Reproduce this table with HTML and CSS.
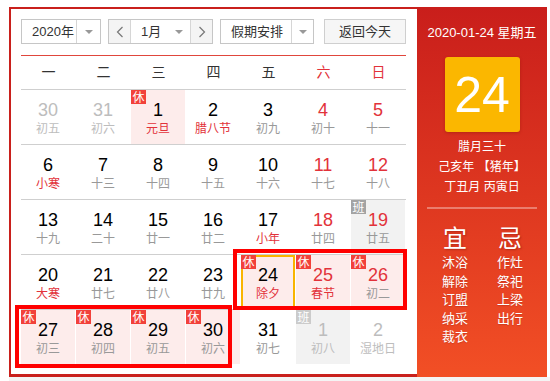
FILE: index.html
```html
<!DOCTYPE html>
<html lang="zh-CN">
<head>
<meta charset="utf-8">
<title>万年历</title>
<link rel="stylesheet" href="styles.css">
</head>
<body>
<div class="page">
  <div class="cal">
    <div class="main">
      <div class="controls">
        <div class="sel sel-year">
          <span class="sel-text">2020年</span>
          <span class="sel-arrow"><i class="tri"></i></span>
        </div>
        <div class="sel sel-month">
          <span class="nav-btn nav-prev"><svg width="8" height="12" viewBox="0 0 8 12"><polyline points="6.5,1 1.5,6 6.5,11" fill="none" stroke="#777" stroke-width="1.2"/></svg></span>
          <span class="month-mid"><span class="sel-text">1月</span><i class="tri"></i></span>
          <span class="nav-btn nav-next"><svg width="8" height="12" viewBox="0 0 8 12"><polyline points="1.5,1 6.5,6 1.5,11" fill="none" stroke="#777" stroke-width="1.2"/></svg></span>
        </div>
        <div class="sel sel-holiday">
          <span class="sel-text">假期安排</span>
          <span class="sel-arrow"><i class="tri"></i></span>
        </div>
        <button class="today-btn">返回今天</button>
      </div>
      <div class="redline"></div>
      <div class="weekhead">
        <span>一</span><span>二</span><span>三</span><span>四</span><span>五</span><span class="wk">六</span><span class="wk">日</span>
      </div>
      <div class="grid">
        <div class="row">
          <div class="cell other"><b>30</b><em>初五</em></div>
          <div class="cell other"><b>31</b><em>初六</em></div>
          <div class="cell rest"><i class="badge">休</i><b>1</b><em class="fest">元旦</em></div>
          <div class="cell"><b>2</b><em class="fest">腊八节</em></div>
          <div class="cell"><b>3</b><em>初九</em></div>
          <div class="cell weekend"><b>4</b><em>初十</em></div>
          <div class="cell weekend"><b>5</b><em>十一</em></div>
        </div>
        <div class="row">
          <div class="cell"><b>6</b><em class="fest">小寒</em></div>
          <div class="cell"><b>7</b><em>十三</em></div>
          <div class="cell"><b>8</b><em>十四</em></div>
          <div class="cell"><b>9</b><em>十五</em></div>
          <div class="cell"><b>10</b><em>十六</em></div>
          <div class="cell weekend"><b>11</b><em>十七</em></div>
          <div class="cell weekend"><b>12</b><em>十八</em></div>
        </div>
        <div class="row">
          <div class="cell"><b>13</b><em>十九</em></div>
          <div class="cell"><b>14</b><em>二十</em></div>
          <div class="cell"><b>15</b><em>廿一</em></div>
          <div class="cell"><b>16</b><em>廿二</em></div>
          <div class="cell"><b>17</b><em class="fest">小年</em></div>
          <div class="cell weekend"><b>18</b><em>廿四</em></div>
          <div class="cell weekend work"><i class="badge ban">班</i><b>19</b><em>廿五</em></div>
        </div>
        <div class="row">
          <div class="cell"><b>20</b><em class="fest">大寒</em></div>
          <div class="cell"><b>21</b><em>廿七</em></div>
          <div class="cell"><b>22</b><em>廿八</em></div>
          <div class="cell"><b>23</b><em>廿九</em></div>
          <div class="cell rest today"><i class="badge">休</i><b>24</b><em class="fest">除夕</em></div>
          <div class="cell rest weekend"><i class="badge">休</i><b>25</b><em class="fest">春节</em></div>
          <div class="cell rest weekend"><i class="badge">休</i><b>26</b><em>初二</em></div>
        </div>
        <div class="row">
          <div class="cell rest"><i class="badge">休</i><b>27</b><em>初三</em></div>
          <div class="cell rest"><i class="badge">休</i><b>28</b><em>初四</em></div>
          <div class="cell rest"><i class="badge">休</i><b>29</b><em>初五</em></div>
          <div class="cell rest"><i class="badge">休</i><b>30</b><em>初六</em></div>
          <div class="cell"><b>31</b><em>初七</em></div>
          <div class="cell other work"><i class="badge ban light">班</i><b>1</b><em>初八</em></div>
          <div class="cell other"><b>2</b><em>湿地日</em></div>
        </div>
      </div>
      <div class="mark mark-a"></div>
      <div class="mark mark-b"></div>
    </div>
    <div class="panel">
      <div class="p-date">2020-01-24 星期五</div>
      <div class="p-day">24</div>
      <div class="p-lunar">
        <div>腊月三十</div>
        <div>己亥年 【猪年】</div>
        <div>丁丑月 丙寅日</div>
      </div>
      <div class="p-line"></div>
      <div class="yiji">
        <div class="yj-col">
          <div class="yj-big">宜</div>
          <div class="yj-item">沐浴</div>
          <div class="yj-item">解除</div>
          <div class="yj-item">订盟</div>
          <div class="yj-item">纳采</div>
          <div class="yj-item">裁衣</div>
        </div>
        <div class="yj-col">
          <div class="yj-big">忌</div>
          <div class="yj-item">作灶</div>
          <div class="yj-item">祭祀</div>
          <div class="yj-item">上梁</div>
          <div class="yj-item">出行</div>
        </div>
      </div>
    </div>
  </div>
  <div class="under"></div>
</div>
</body>
</html>
```
FILE: styles.css
```css
* { box-sizing: border-box; }
html, body { margin: 0; padding: 0; background: #fff; }
body {
  font-family: "Liberation Sans", "Noto Sans CJK SC", sans-serif;
  color: #333;
  width: 550px;
  height: 381px;
  overflow: hidden;
}
.page { padding: 7px 0 0 9px; }
.cal { display: flex; width: 538px; height: 370px; }
.main {
  position: relative;
  width: 408px;
  height: 370px;
  border: 2px solid #c9201c;
  border-right: 0;
  border-bottom-width: 3px;
  padding: 10px 11px 0 10px;
}
.controls { display: flex; height: 25px; }
.sel {
  display: flex;
  height: 25px;
  border: 1px solid #c6c6c6;
  background: #fff;
  font-size: 13px;
  line-height: 23px;
  color: #333;
}
.sel-text { font-family: "Liberation Sans", "Noto Sans CJK SC", sans-serif; }
.sel-year { width: 80px; margin-right: 7px; }
.sel-year .sel-text { width: 54px; padding-left: 10px; }
.sel-arrow {
  flex: 1;
  border-left: 1px solid #d6d6d6;
  display: flex;
  align-items: center;
  justify-content: center;
}
.tri {
  display: block;
  width: 0; height: 0;
  border-left: 4px solid transparent;
  border-right: 4px solid transparent;
  border-top: 4px solid #999;
}
.sel-month { width: 105px; margin-right: 7px; }
.nav-btn {
  width: 22px;
  background: #f4f4f4;
  display: flex;
  align-items: center;
  justify-content: center;
}
.nav-prev { border-right: 1px solid #d6d6d6; }
.nav-next { border-left: 1px solid #d6d6d6; }
.month-mid {
  flex: 1;
  display: flex;
  align-items: center;
  padding-left: 10px;
  padding-right: 7px;
  justify-content: space-between;
}
.sel-holiday { width: 94px; margin-right: 10px; }
.sel-holiday .sel-text { width: 70px; padding-left: 10px; }
.sel-holiday .sel-arrow { flex: 1; }
.today-btn {
  width: 82px;
  height: 25px;
  border: 1px solid #cfcfcf;
  background: #f6f6f6;
  font-family: "Liberation Sans", "Noto Sans CJK SC", sans-serif;
  font-size: 13px;
  color: #333;
  padding: 0;
  line-height: 23px;
}
.redline { height: 1px; background: #e0463c; margin-top: 11px; }
.weekhead {
  display: grid;
  grid-template-columns: repeat(7, 55px);
  height: 33px;
  line-height: 33px;
  font-size: 14px;
  text-align: center;
  color: #333;
}
.weekhead .wk { color: #e2323a; }
.row {
  display: grid;
  grid-template-columns: repeat(7, 55px);
  height: 55px;
  border-top: 1px solid #cfcfcf;
}
.cell {
  position: relative;
  margin-right: 1px;
  height: 54px;
  padding-top: 10px;
  text-align: center;
}
.cell b {
  display: block;
  font-weight: normal;
  font-size: 18px;
  line-height: 20px;
  color: #000;
  font-family: "Liberation Sans", sans-serif;
}
.cell em {
  display: block;
  font-style: normal;
  font-size: 12px;
  line-height: 16px;
  color: #999;
  font-family: "Noto Sans CJK SC", sans-serif;
}
.cell em.fest { color: #e2323a; }
.cell.weekend b { color: #e2323a; }
.cell.other b, .cell.other em { color: #bdbdbd; }
.cell.rest { background: #fdeceb; }
.cell.work { background: #f2f2f2; }
.cell.today { border: 2px solid #f9b400; padding-top: 8px; }
.badge {
  position: absolute;
  top: 0; left: 0;
  width: 15px; height: 14px;
  background: #f2413a;
  color: #fff;
  font-style: normal;
  font-size: 12px;
  line-height: 14px;
  text-align: center;
  font-family: "Noto Sans CJK SC", sans-serif;
}
.cell.today .badge { top: -2px; left: -2px; }
.badge.ban { background: #a3a3a3; }
.badge.ban.light { background: #cbcbcb; }
.mark {
  position: absolute;
  border: 4px solid #ff0000;
  pointer-events: none;
}
.mark-a { left: 222px; top: 240px; width: 174px; height: 61px; }
.mark-b { left: 4px; top: 296px; width: 217px; height: 63px; }
.panel {
  width: 130px;
  height: 370px;
  background: linear-gradient(#c91e1b, #f24f25);
  color: #fff;
  text-align: center;
  padding-top: 16px;
  font-family: "Liberation Sans", "Noto Sans CJK SC", sans-serif;
}
.p-date { font-size: 13px; line-height: 20px; }
.p-day {
  width: 75px; height: 75px;
  margin: 14px auto 0;
  background: #fbb700;
  border-radius: 3px;
  box-shadow: 0 1px 3px rgba(120, 20, 0, 0.35);
  font-size: 50px;
  line-height: 77px;
  font-family: "Liberation Sans", sans-serif;
}
.p-lunar { margin-top: 5px; font-size: 12px; line-height: 20px; }
.p-line {
  width: 110px;
  height: 2px;
  margin: 10px auto 0;
  background: rgba(255, 255, 255, 0.35);
}
.yiji {
  display: flex;
  gap: 15px;
  padding-left: 18px;
  margin-top: 13px;
}
.yj-col { width: 40px; }
.yj-big {
  font-size: 24px;
  line-height: 30px;
  margin-bottom: 1px;
  text-shadow: 1px 1px 2px rgba(90, 0, 0, 0.35);
  font-family: "Noto Sans CJK SC", sans-serif;
}
.yj-item {
  font-size: 13px;
  line-height: 18.5px;
  text-shadow: 0 1px 1px rgba(90, 0, 0, 0.2);
  font-family: "Noto Sans CJK SC", sans-serif;
}
.under { height: 4px; background: #f4f4f4; }
```
